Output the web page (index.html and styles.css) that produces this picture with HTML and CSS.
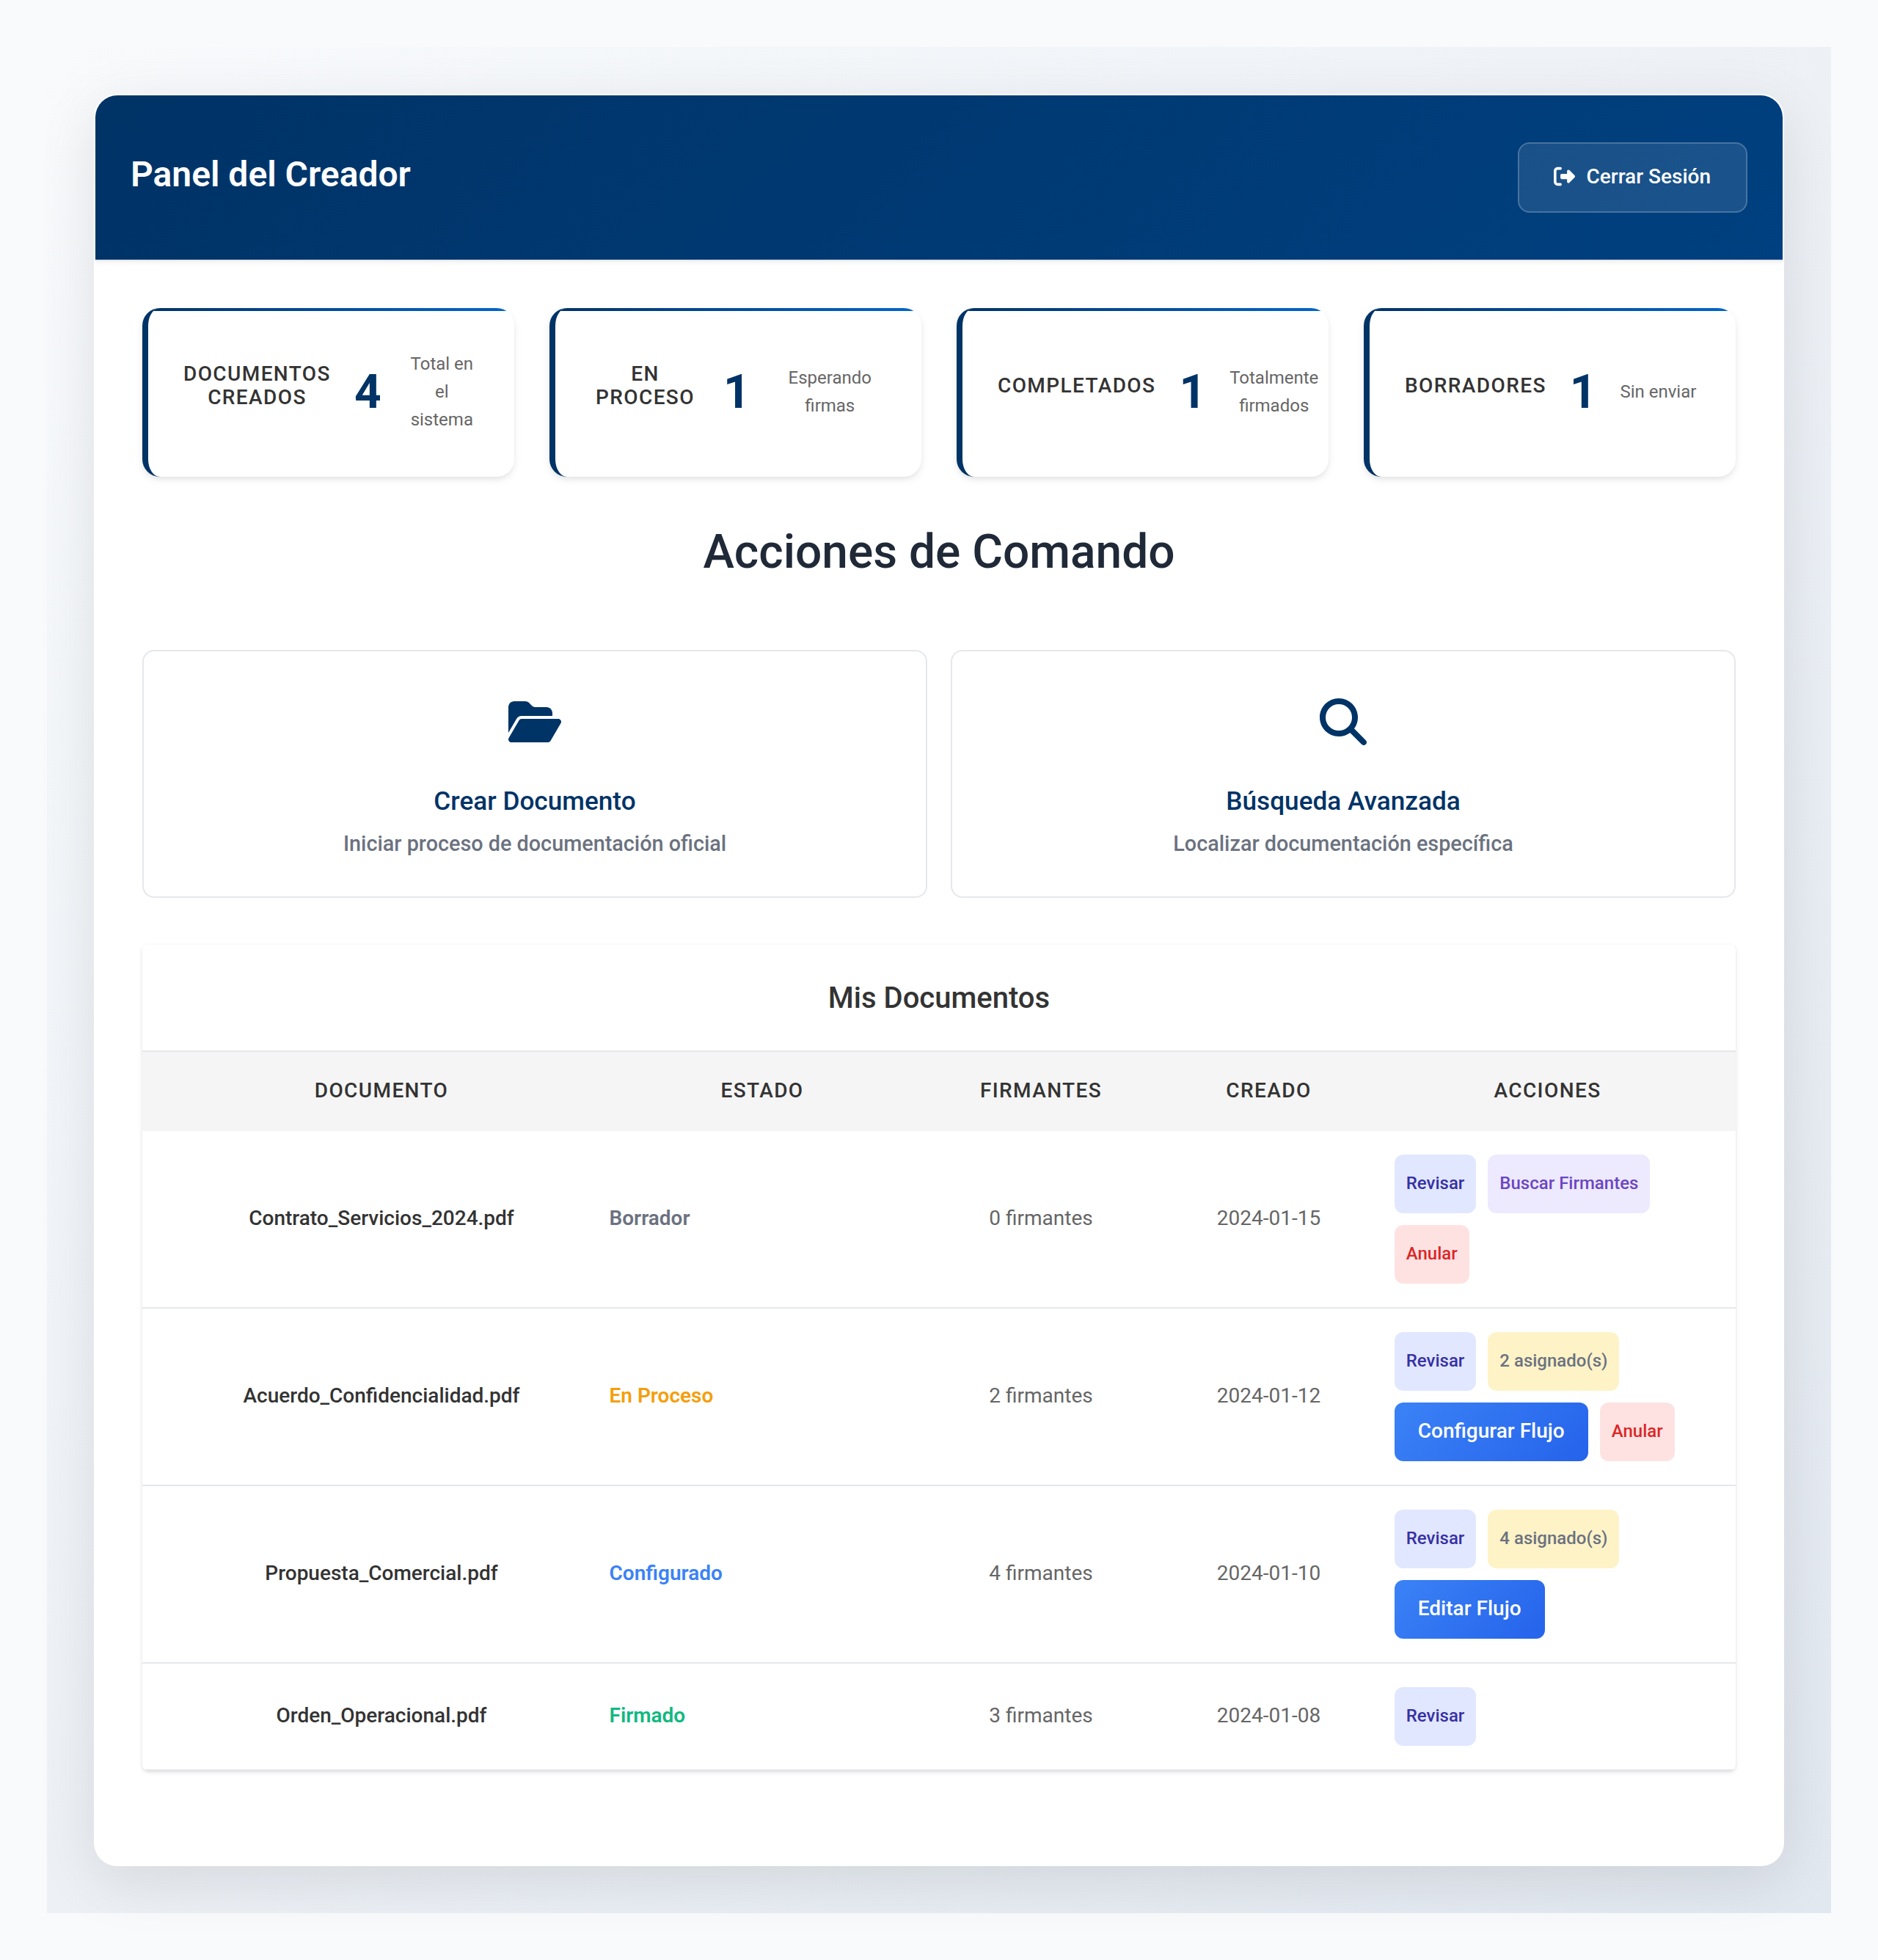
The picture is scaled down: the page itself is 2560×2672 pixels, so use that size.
FILE: index.html
```html
<!DOCTYPE html>
<html lang="es">
<head>
<meta charset="utf-8">
<title>Panel del Creador</title>
<link rel="stylesheet" href="styles.css">
</head>
<body>
<div class="page">
  <main class="panel">
    <header class="panel-header">
      <h1 class="panel-title">Panel del Creador</h1>
      <button class="logout" type="button">
        <svg class="logout-icon" viewBox="0 0 512 512" aria-hidden="true"><path fill="currentColor" d="M377.9 105.9L500.7 228.7c7.2 7.2 11.3 17.1 11.3 27.3s-4.1 20.1-11.3 27.3L377.9 406.1c-6.4 6.4-15 9.9-24 9.9c-18.7 0-33.9-15.2-33.9-33.9l0-62.1-128 0c-17.7 0-32-14.3-32-32l0-64c0-17.7 14.3-32 32-32l128 0 0-62.1c0-18.7 15.2-33.9 33.9-33.9c9 0 17.6 3.6 24 9.9zM160 96L96 96c-17.7 0-32 14.3-32 32l0 256c0 17.7 14.3 32 32 32l64 0c17.7 0 32 14.3 32 32s-14.3 32-32 32l-64 0c-53 0-96-43-96-96L0 128C0 75 43 32 96 32l64 0c17.7 0 32 14.3 32 32s-14.3 32-32 32z"/></svg>
        <span>Cerrar Sesión</span>
      </button>
    </header>
    <div class="panel-body">
      <section class="stats">
        <article class="stat"><h3 class="stat-label">Documentos Creados</h3><div class="stat-value">4</div><p class="stat-note">Total en el sistema</p></article>
        <article class="stat"><h3 class="stat-label">En Proceso</h3><div class="stat-value">1</div><p class="stat-note">Esperando firmas</p></article>
        <article class="stat"><h3 class="stat-label">Completados</h3><div class="stat-value">1</div><p class="stat-note">Totalmente firmados</p></article>
        <article class="stat"><h3 class="stat-label">Borradores</h3><div class="stat-value">1</div><p class="stat-note">Sin enviar</p></article>
      </section>

      <h2 class="section-title">Acciones de Comando</h2>
      <section class="actions">
        <article class="action">
          <svg class="action-icon action-icon-wide" viewBox="0 0 576 512" aria-hidden="true"><path fill="currentColor" d="M88.7 223.8L0 375.8V96C0 60.7 28.7 32 64 32H181.5c17 0 33.3 6.7 45.3 18.7l26.5 26.5c12 12 28.3 18.7 45.3 18.7H416c35.3 0 64 28.7 64 64v32H144c-22.8 0-43.8 12.1-55.3 31.8zm27.6 16.1C122.1 230 132.6 224 144 224H544c11.5 0 22 6.1 27.7 16.1s5.7 22.2-.1 32.1l-112 192C453.9 474 443.4 480 432 480H32c-11.5 0-22-6.1-27.7-16.1s-5.7-22.2 .1-32.1l112-192z"/></svg>
          <h3 class="action-title">Crear Documento</h3>
          <p class="action-text">Iniciar proceso de documentación oficial</p>
        </article>
        <article class="action">
          <svg class="action-icon" viewBox="0 0 512 512" aria-hidden="true"><path fill="currentColor" d="M416 208c0 45.9-14.9 88.3-40 122.7L502.6 457.4c12.5 12.5 12.5 32.8 0 45.3s-32.8 12.5-45.3 0L330.7 376c-34.4 25.2-76.8 40-122.7 40C93.1 416 0 322.9 0 208S93.1 0 208 0S416 93.1 416 208zM208 352a144 144 0 1 0 0-288 144 144 0 1 0 0 288z"/></svg>
          <h3 class="action-title">Búsqueda Avanzada</h3>
          <p class="action-text">Localizar documentación específica</p>
        </article>
      </section>

      <section class="documents">
        <h3 class="documents-title">Mis Documentos</h3>
        <table class="table">
          <colgroup><col class="col-doc"><col class="col-state"><col class="col-signers"><col class="col-date"><col class="col-actions"></colgroup>
          <thead>
            <tr><th>Documento</th><th>Estado</th><th>Firmantes</th><th>Creado</th><th>Acciones</th></tr>
          </thead>
          <tbody>
            <tr>
              <td class="doc">Contrato_Servicios_2024.pdf</td>
              <td class="state-cell"><span class="state state-draft">Borrador</span></td>
              <td>0 firmantes</td>
              <td>2024-01-15</td>
              <td class="buttons-cell"><div class="buttons"><button class="btn btn-review">Revisar</button><button class="btn btn-search">Buscar Firmantes</button><button class="btn btn-void">Anular</button></div></td>
            </tr>
            <tr>
              <td class="doc">Acuerdo_Confidencialidad.pdf</td>
              <td class="state-cell"><span class="state state-process">En Proceso</span></td>
              <td>2 firmantes</td>
              <td>2024-01-12</td>
              <td class="buttons-cell"><div class="buttons"><button class="btn btn-review">Revisar</button><span class="btn btn-assigned">2 asignado(s)</span><button class="btn btn-flow">Configurar Flujo</button><button class="btn btn-void">Anular</button></div></td>
            </tr>
            <tr>
              <td class="doc">Propuesta_Comercial.pdf</td>
              <td class="state-cell"><span class="state state-ready">Configurado</span></td>
              <td>4 firmantes</td>
              <td>2024-01-10</td>
              <td class="buttons-cell"><div class="buttons"><button class="btn btn-review">Revisar</button><span class="btn btn-assigned">4 asignado(s)</span><button class="btn btn-flow">Editar Flujo</button></div></td>
            </tr>
            <tr>
              <td class="doc">Orden_Operacional.pdf</td>
              <td class="state-cell"><span class="state state-signed">Firmado</span></td>
              <td>3 firmantes</td>
              <td>2024-01-08</td>
              <td class="buttons-cell"><div class="buttons"><button class="btn btn-review">Revisar</button></div></td>
            </tr>
          </tbody>
        </table>
      </section>
    </div>
  </main>
</div>
</body>
</html>
```
FILE: styles.css
```css
* {
  box-sizing: border-box;
  margin: 0;
  padding: 0;
}

body {
  padding: 64px;
  background: #f8fafc;
  color: #333;
  font-family: Roboto, "Liberation Sans", sans-serif;
  font-size: 28px;
}

button {
  border: 0;
  font-family: inherit;
}

.page {
  min-height: 2544px;
  padding: 64px;
  background: linear-gradient(135deg, #f8fafc 0%, #e2e8f0 100%);
}

.panel {
  height: 2416px;
  border: 2px solid #fff;
  border-radius: 32px;
  background: #fff;
  box-shadow: 0 20px 80px rgba(0, 0, 0, 0.1);
  overflow: hidden;
}

/* Header */
.panel-header {
  display: flex;
  align-items: center;
  justify-content: space-between;
  height: 226px;
  padding: 0 48px;
  border-bottom: 2px solid #e5e9ef;
  background: linear-gradient(135deg, #003366 0%, #004080 100%) padding-box;
  box-shadow: 0 2px 6px rgba(0, 0, 0, 0.06);
  color: #fff;
}

.panel-title {
  margin-bottom: 10px;
  font-size: 48px;
  font-weight: 600;
}

.logout {
  display: flex;
  align-items: center;
  gap: 16px;
  height: 96px;
  padding: 0 48px 3px 47px;
  border: 2px solid rgba(255, 255, 255, 0.2);
  border-radius: 16px;
  background: rgba(255, 255, 255, 0.1);
  color: #fff;
  font-size: 28px;
  font-weight: 500;
}

.logout-icon {
  width: 29px;
  height: 29px;
}

.panel-body {
  padding: 64px 64px 0;
}

/* Summary cards */
.stats {
  display: grid;
  grid-template-columns: repeat(4, minmax(0, 1fr));
  gap: 48px;
}

.stat {
  position: relative;
  display: flex;
  align-items: center;
  gap: 32px;
  height: 230px;
  padding: 46px 48px 48px;
  border-left: 8px solid #003366;
  border-radius: 24px;
  background: #fff;
  box-shadow: 0 4px 12px -1px rgba(0, 0, 0, 0.1), 0 4px 6px -2px rgba(0, 0, 0, 0.04);
  text-align: center;
  overflow: hidden;
}

.stat::before {
  content: "";
  position: absolute;
  top: 0;
  right: 0;
  left: 0;
  height: 4px;
  background: linear-gradient(90deg, #003366, #0066cc);
}

.stat-label {
  margin-bottom: 16px;
  font-size: 28px;
  font-weight: 500;
  line-height: 32px;
  letter-spacing: 1.4px;
  text-transform: uppercase;
}

.stat-value {
  padding-top: 2px;
  color: #003366;
  font-size: 64px;
  font-weight: 700;
  line-height: 1;
}

.stat-note {
  color: #666;
  font-size: 24px;
  line-height: 38px;
}

/* Quick actions */
.section-title {
  margin: 65px 0 95px;
  color: #1f2937;
  font-size: 64px;
  font-weight: 500;
  line-height: 76px;
  text-align: center;
}

.actions {
  display: grid;
  grid-template-columns: 1fr 1fr;
  gap: 32px;
}

.action {
  display: flex;
  flex-direction: column;
  align-items: center;
  height: 338px;
  padding-top: 64px;
  border: 2px solid #e5e7eb;
  border-radius: 16px;
  background: #fff;
}

.action-icon {
  width: 64px;
  height: 64px;
  margin-bottom: 50px;
  color: #003366;
}

.action-icon-wide {
  width: 72px;
}

.action-title {
  margin-bottom: 12px;
  color: #003366;
  font-size: 35.2px;
  font-weight: 500;
  line-height: 52px;
}

.action-text {
  color: #6b7280;
  font-size: 28.8px;
  font-weight: 500;
  line-height: 40px;
}

/* Documents */
.documents {
  margin-top: 64px;
  border-radius: 8px;
  background: #fff;
  box-shadow: 0 2px 6px rgba(0, 0, 0, 0.1), 0 2px 4px -2px rgba(0, 0, 0, 0.1);
  overflow: hidden;
}

.documents-title {
  height: 146px;
  padding-top: 49px;
  border-bottom: 2px solid #e5e7eb;
  font-size: 40px;
  font-weight: 500;
  line-height: 48px;
  text-align: center;
}

.table {
  width: 100%;
  border-collapse: separate;
  border-spacing: 0;
  table-layout: fixed;
}

.col-doc { width: 652px; }
.col-state { width: 386px; }
.col-signers { width: 374px; }
.col-date { width: 247px; }
.col-actions { width: 513px; }

.table th {
  height: 108px;
  padding-bottom: 3px;
  background: #f5f5f5;
  font-size: 28px;
  font-weight: 500;
  letter-spacing: 1.4px;
  text-transform: uppercase;
}

.table td {
  padding: 28px 0 32px;
  border-bottom: 2px solid #e5e7eb;
  color: #666;
  font-size: 28px;
  text-align: center;
  vertical-align: middle;
}

.table .doc {
  color: #333;
  font-weight: 500;
}

.table .state-cell {
  text-align: left;
}

.state {
  margin-left: -15.5px;
  font-weight: 600;
}

.state-draft { color: #6b7280; }
.state-process { color: #f59e0b; }
.state-ready { color: #3b82f6; }
.state-signed { color: #10b981; }

.table .buttons-cell {
  padding: 32px 48px 32px 47.75px;
}

.buttons {
  display: flex;
  flex-wrap: wrap;
  gap: 16px;
}

.btn {
  height: 80px;
  padding: 0 16px 2px;
  border-radius: 12px;
  font-size: 24px;
  font-weight: 500;
  line-height: 78px;
}

.btn-review { background: #e0e7ff; color: #3730a3; }
.btn-search { background: #ede9fe; color: #6b46c1; }
.btn-void { background: #fee2e2; color: #dc2626; }
.btn-assigned { background: #fef3c7; color: #6b7280; }

.btn-flow {
  padding: 0 32px 2px;
  background: linear-gradient(135deg, #3b82f6, #2563eb);
  color: #fff;
  font-size: 28px;
}
```
